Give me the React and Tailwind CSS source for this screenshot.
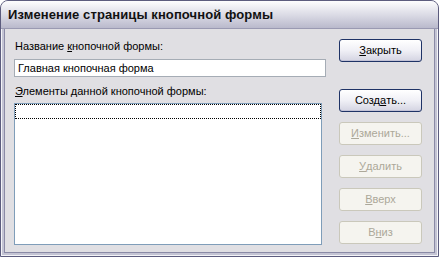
import React from 'react';

const font = { fontFamily: '"Liberation Sans", Arial, sans-serif' };

function Btn({ children, disabled }) {
  return (
    <div
      className={
        disabled
          ? 'h-[23px] w-[83px] rounded-[3px] border border-[#cac8bb] bg-[#f5f4ef] text-[#aca899] flex items-center justify-center text-[11px]'
          : 'h-[23px] w-[83px] rounded-[3px] border border-[#1f3366] bg-gradient-to-b from-[#ffffff] via-[#f0f0f6] to-[#d4d4e2] text-black flex items-center justify-center text-[11px] shadow-[inset_0_-1px_0_#c2c2d6]'
      }
    >
      {children}
    </div>
  );
}

export default function App() {
  return (
    <div className="w-[439px] h-[257px] bg-white" style={font}>
      <div className="w-full h-full flex flex-col rounded-t-[8px] border border-[#5c5c7e] bg-[#c8c8d6] overflow-hidden">
        {/* заголовок */}
        <div className="h-[28px] shrink-0 flex items-center pl-[7px] bg-gradient-to-b from-[#fdfdfe] via-[#dcdce6] to-[#babacc] border-b border-[#9a9ab2]">
          <span className="text-[13px] font-bold text-[#111] tracking-[0.1px]">Изменение страницы кнопочной формы</span>
        </div>
        {/* рамка */}
        <div className="flex-1 flex border-x border-b border-[#f4f4f8] px-[2px] pb-[2px] bg-[#c4c4d4]">
          <div className="flex-1 flex bg-[#e0dfe3] border border-[#8a8aa6] border-t-0 pl-[9px] pt-[10px]">
            <div className="flex flex-col w-[312px] text-[11px] text-black">
              <div className="h-[14px] leading-[14px] pl-px">
                Название <span className="underline">к</span>нопочной формы:
              </div>
              <div className="mt-[6px] h-[18px] border border-[#a5acb5] bg-white leading-[16px] pl-[3px]">
                Главная кнопочная форма
              </div>
              <div className="mt-[7px] h-[14px] leading-[14px] pl-px">
                <span className="underline">Э</span>лементы данной кнопочной формы:
              </div>
              <div className="mt-[5px] w-[308px] h-[142px] border border-[#7f9db9] bg-white p-0">
                <div className="h-[15px] border border-dotted border-black"></div>
              </div>
            </div>
            <div className="ml-[13px] flex flex-col text-[11px]">
              <Btn>
                <span className="underline">З</span>акрыть
              </Btn>
              <div className="mt-[27px] flex flex-col gap-[10px]">
                <Btn>
                  Созд<span className="underline">а</span>ть...
                </Btn>
                <Btn disabled>
                  <span className="underline">И</span>зменить...
                </Btn>
                <Btn disabled>
                  <span className="underline">У</span>далить
                </Btn>
                <Btn disabled>
                  <span className="underline">В</span>верх
                </Btn>
                <Btn disabled>
                  В<span className="underline">н</span>из
                </Btn>
              </div>
            </div>
          </div>
        </div>
      </div>
    </div>
  );
}
